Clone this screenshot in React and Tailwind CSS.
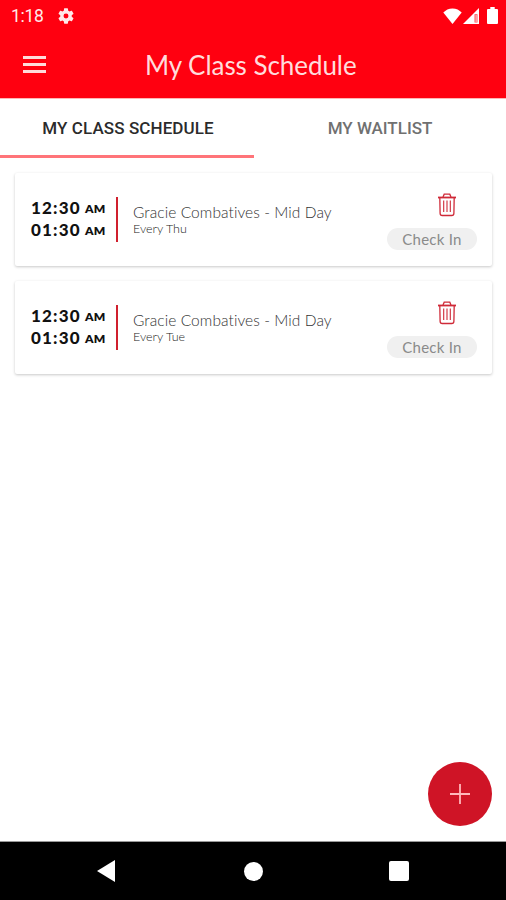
const CLASSES = [
  { id: 1, start: '12:30', end: '01:30', name: 'Gracie Combatives - Mid Day', repeat: 'Every Thu' },
  { id: 2, start: '12:30', end: '01:30', name: 'Gracie Combatives - Mid Day', repeat: 'Every Tue' },
];

function StatusBar() {
  return (
    <div className="flex h-8 items-center pl-[11px] pr-[8px] text-[#ffe9e9]">
      <span className="w-[47px] pt-[2px] font-[Roboto] text-[17.5px] leading-none tracking-[-0.3px]">1:18</span>
      <svg viewBox="2 2 20 20" className="-mt-px h-4 w-4" fill="currentColor">
        <path d="M19.14 12.94c.04-.3.06-.61.06-.94 0-.32-.02-.64-.07-.94l2.03-1.58a.49.49 0 0 0 .12-.61l-1.92-3.32a.49.49 0 0 0-.59-.22l-2.39.96c-.5-.38-1.03-.7-1.62-.94l-.36-2.54a.48.48 0 0 0-.48-.41h-3.84c-.24 0-.43.17-.47.41l-.36 2.54c-.59.24-1.13.57-1.62.94l-2.39-.96a.49.49 0 0 0-.59.22L2.74 8.87c-.12.21-.08.47.12.61l2.03 1.58c-.05.3-.09.63-.09.94s.02.64.07.94l-2.03 1.58a.49.49 0 0 0-.12.61l1.92 3.32c.12.22.37.29.59.22l2.39-.96c.5.38 1.03.7 1.62.94l.36 2.54c.05.24.24.41.48.41h3.84c.24 0 .44-.17.47-.41l.36-2.54c.59-.24 1.13-.56 1.62-.94l2.39.96c.22.08.47 0 .59-.22l1.92-3.32a.49.49 0 0 0-.12-.61l-2.01-1.58zM12 15.1a3.1 3.1 0 1 1 0-6.2 3.1 3.1 0 0 1 0 6.2z" />
      </svg>
      <div className="-mt-px ml-auto flex items-center text-white">
        <svg viewBox="0 0 19 16" className="mr-[1px] h-4 w-[19px]" fill="currentColor">
          <path d="M9.5 16 0.3 4.5C2.6 2 5.8.4 9.5.4s6.9 1.6 9.2 4.1z" />
        </svg>
        <svg viewBox="0 0 16 16" className="mr-[8px] h-4 w-4">
          <path d="M0 16 16 0v16z" fill="currentColor" />
          <path d="M11.5 6.2h3v8.3h-3z" fill="#ff0010" fillOpacity="0.7" />
          <path d="M13.1 7v7" stroke="#fff" strokeWidth="0.8" />
        </svg>
        <svg viewBox="0 0 11 17" className="h-[17px] w-[11px]" fill="currentColor">
          <path d="M3.3 0h4.4v2H10a1 1 0 0 1 1 1v13a1 1 0 0 1-1 1H1a1 1 0 0 1-1-1V3a1 1 0 0 1 1-1h2.3z" />
        </svg>
      </div>
    </div>
  );
}

function TrashIcon() {
  return (
    <svg viewBox="0 0 20 24" className="h-6 w-5" fill="none" stroke="#cf2a38" strokeWidth="1.3">
      <path d="M1 4.5h18" strokeWidth="1.8" />
      <path d="M6 4 7.2 1.2h5.6L14 4" />
      <path d="M2.8 4.5l.3 15.8a2.2 2.2 0 0 0 2.2 2.2h9.4a2.2 2.2 0 0 0 2.2-2.2L17.2 4.5" />
      <path d="M6.7 7.5V19M10 7.5V19M13.3 7.5V19" strokeWidth="1.1" />
    </svg>
  );
}

function TimeLine({ value }) {
  return (
    <div className="flex h-[22px] items-start text-[#111]">
      <span className="w-[54px] text-[17px] font-black leading-[22px] tracking-[1.2px]">{value}</span>
      <span className="text-[12px] font-extrabold leading-[24px] tracking-[0.3px]">AM</span>
    </div>
  );
}

function ClassCard({ item }) {
  return (
    <div className="flex h-[93px] rounded-[2px] bg-white pl-4 pr-[15px] shadow-[0_1px_3px_rgba(0,0,0,0.22)]">
      <div className="w-[85px] pt-6">
        <TimeLine value={item.start} />
        <TimeLine value={item.end} />
      </div>
      <div className="mt-6 h-[45px] w-[2px] bg-[#d0202e]" />
      <div className="flex-1 whitespace-nowrap pl-[15px] pt-[30px]">
        <p className="text-[15.5px] font-light leading-[19px] tracking-[0.08px] text-[#333]">{item.name}</p>
        <p className="-mt-px text-[12.5px] font-light leading-[15px] text-[#222]">{item.repeat}</p>
      </div>
      <div className="flex w-[90px] flex-col pt-5">
        <button className="ml-[50px] h-6 w-5" aria-label="Delete">
          <TrashIcon />
        </button>
        <button className="mt-[11px] h-[22px] rounded-full bg-[#f0f0f0] text-[15px] leading-[22px] tracking-[0.25px] text-[#8a8a8a]">
          Check In
        </button>
      </div>
    </div>
  );
}

export default function App() {
  return (
    <div className="flex h-[900px] w-[506px] flex-col overflow-hidden bg-white font-[Lato,sans-serif]">
      <header className="h-[99px] shrink-0 border-b border-[#ffb5b5] bg-[#ff0010]">
        <StatusBar />
        <div className="flex h-16 items-center pl-[23px]">
          <button className="flex w-[23px] flex-col gap-1" aria-label="Menu">
            <span className="h-[3px] bg-[#ffdada]" />
            <span className="h-[3px] bg-[#ffdada]" />
            <span className="h-[3px] bg-[#ffdada]" />
          </button>
          <h1 className="ml-[99px] whitespace-nowrap pt-px text-[26px] leading-none tracking-[-0.05px] text-[#ffdcdc]">
            My Class Schedule
          </h1>
        </div>
      </header>

      <nav className="flex h-[59px] shrink-0 font-[Roboto] text-[17px] font-medium">
        <div className="flex w-[254px] items-center justify-center border-b-[3px] border-[#ff7479] pl-[2px] pt-[4px] tracking-[0.1px] text-[#2b2b2b]">
          MY CLASS SCHEDULE
        </div>
        <div className="flex flex-1 items-center justify-center pt-[1px] text-[#707070]">MY WAITLIST</div>
      </nav>

      <main className="flex flex-1 flex-col gap-[15px] pl-[15px] pr-[14px] pt-[15px]">
        {CLASSES.map((item) => (
          <ClassCard key={item.id} item={item} />
        ))}
        <button
          className="mb-[15px] ml-auto mr-[0.5px] mt-auto flex h-16 w-16 items-center justify-center rounded-full bg-[#cf1426]"
          aria-label="Add class"
        >
          <svg viewBox="0 0 20 20" className="h-5 w-5" stroke="#ffb8bc" strokeWidth="1.8">
            <path d="M10 0v20M0 10h20" />
          </svg>
        </button>
      </main>

      <footer className="flex h-[59px] shrink-0 items-center border-t border-[#999] bg-black pl-[97px] text-white">
        <svg viewBox="0 0 18 22" className="h-[22px] w-[18px]" fill="currentColor">
          <path d="M0 11 18 0v22z" />
        </svg>
        <div className="ml-[129px] h-[19px] w-[19px] rounded-full bg-white" />
        <div className="ml-[126px] h-5 w-5 rounded-[2px] bg-white" />
      </footer>
    </div>
  );
}
